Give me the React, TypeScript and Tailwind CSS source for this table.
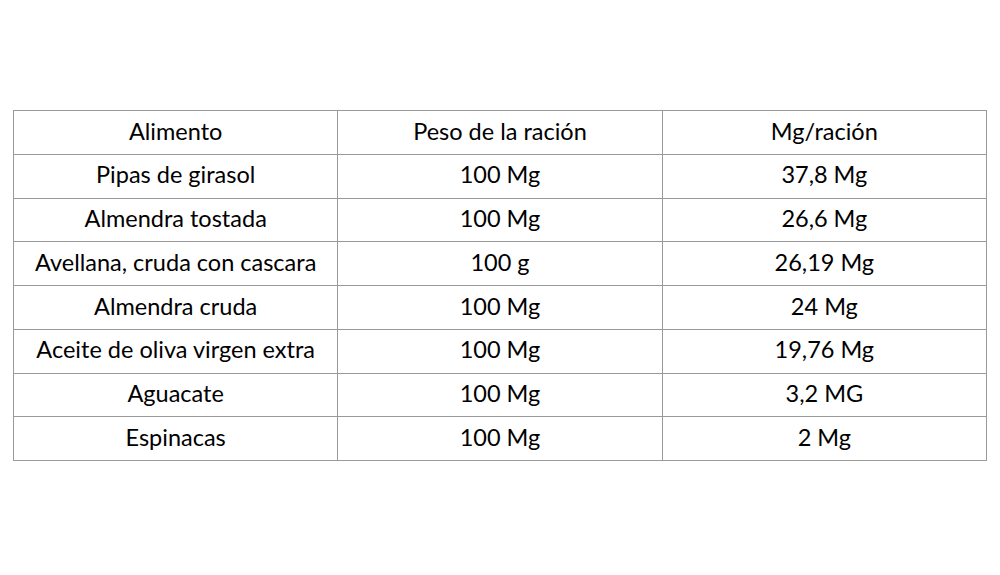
const rows: [string, string, string][] = [
  ["Alimento", "Peso de la ración", "Mg/ración"],
  ["Pipas de girasol", "100 Mg", "37,8 Mg"],
  ["Almendra tostada", "100 Mg", "26,6 Mg"],
  ["Avellana, cruda con cascara", "100 g", "26,19 Mg"],
  ["Almendra cruda", "100 Mg", "24 Mg"],
  ["Aceite de oliva virgen extra", "100 Mg", "19,76 Mg"],
  ["Aguacate", "100 Mg", "3,2 MG"],
  ["Espinacas", "100 Mg", "2 Mg"],
]

const App = () => {
  return (
    <div className="w-[1000px] h-[575px] bg-white pt-[110px] pl-[13px] font-['Lato',sans-serif] text-black">
      <table className="w-[974px] border-collapse table-fixed">
        <tbody>
          {rows.map((row, i) => (
            <tr key={i} className="h-[43.75px]">
              {row.map((cell, j) => (
                <td
                  key={j}
                  className="border border-[#9a9a9a] text-center text-[23.5px] leading-none p-0 pb-[2px]"
                >
                  {cell}
                </td>
              ))}
            </tr>
          ))}
        </tbody>
      </table>
    </div>
  )
}

export default App
